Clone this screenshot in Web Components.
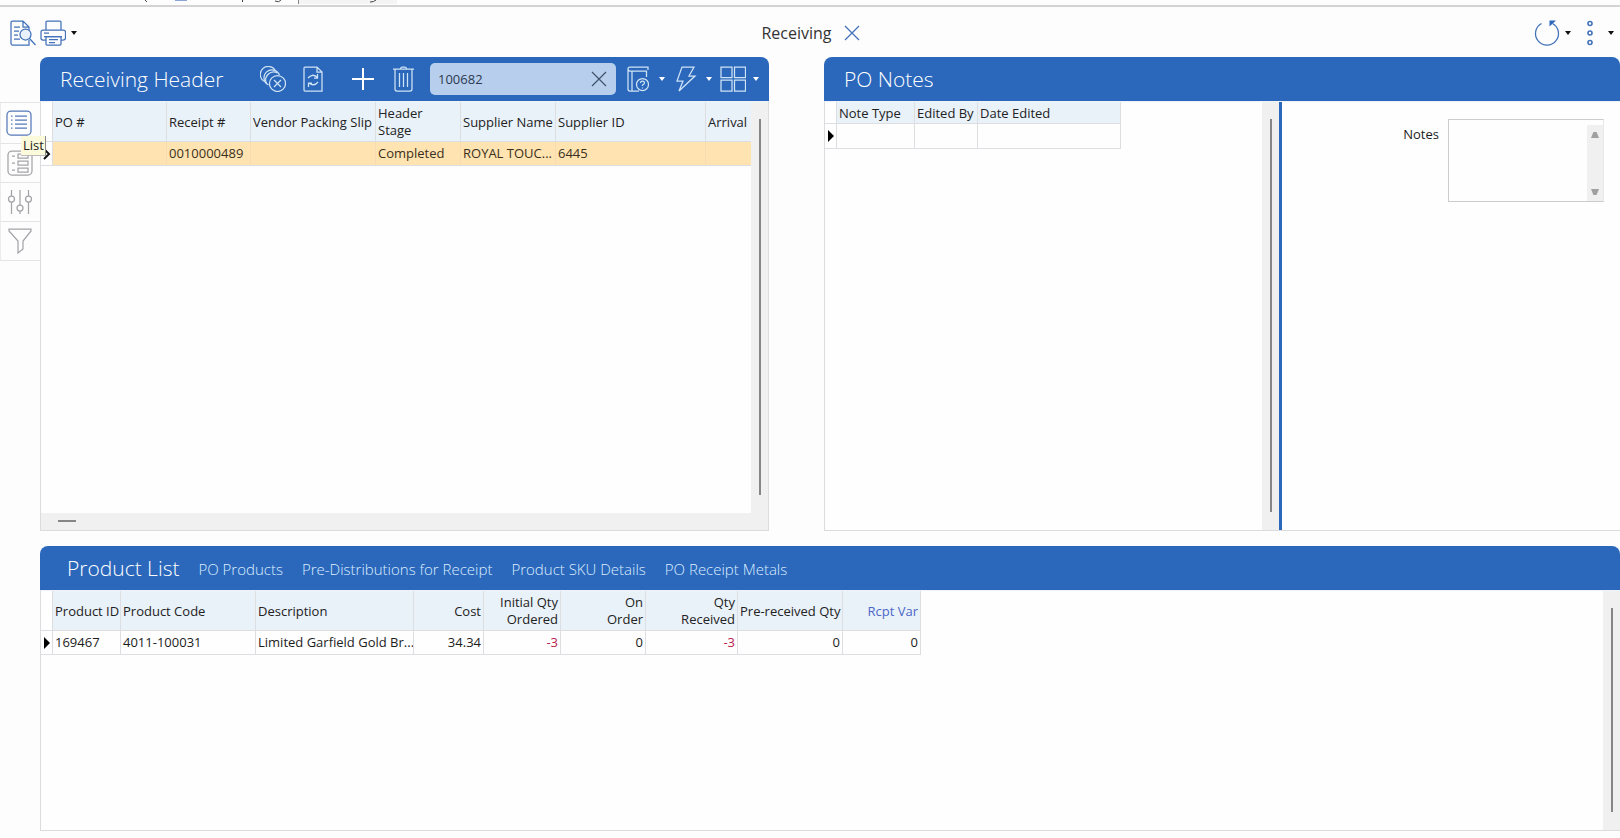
<!DOCTYPE html>
<html lang="en">
<head>
<meta charset="utf-8">
<title>Receiving</title>
<style>
  body { margin: 0; background: #fdfdfe; color: #1c1c1c; font: 13px/17px "Open Sans", "Noto Sans", sans-serif; }
</style>
</head>
<body>
<receiving-app></receiving-app>

<template id="app-template">
  <style>
    :host { display: grid; grid-template: 8px 49px minmax(300px, 474fr) 15px minmax(200px, 285fr) / 40px minmax(0, 1fr); min-height: 100vh; box-sizing: border-box; padding-bottom: 7px; }
    window-strip, page-bar { grid-column: 1 / -1; }
    side-rail { grid-row: 3; grid-column: 1; padding-top: 45px; }
    .upper { grid-row: 3; grid-column: 2; display: grid; grid-template-columns: minmax(0, 729fr) minmax(0, 796fr); gap: 55px; }
    .lower { grid-row: 5; grid-column: 2; }
    .split { flex: 1; display: flex; min-width: 0; }
    .notes-list { flex: 0 1 454px; display: flex; min-width: 0; border-right: 3px solid #2b68bb; }
    .fill { flex: 1; min-width: 0; }
    .detail { flex: 1; display: flex; justify-content: flex-end; align-items: flex-start; padding: 17px 16px 0 0; }
    .column { flex: 1; display: flex; flex-direction: column; min-width: 0; }
    .row { flex: 1; display: flex; min-height: 0; }
    .tabs { display: flex; align-items: center; gap: 19px; padding-left: 7px; }
    .tabs a { color: #dcedff; font-size: 15px; line-height: 20px; text-decoration: none; white-space: nowrap; margin-top: 2px; }
    .tabs h2 { margin: 0; font: inherit; }
  </style>
  <window-strip></window-strip>
  <page-bar heading="Receiving"></page-bar>
  <side-rail></side-rail>
  <div class="upper">
    <work-panel>
      <span slot="title">Receiving Header</span>
      <header-tools slot="tools"></header-tools>
      <div class="column">
        <div class="row">
          <data-grid class="fill" name="receipts" marker="open"></data-grid>
          <scroll-track></scroll-track>
        </div>
        <scroll-track across></scroll-track>
      </div>
    </work-panel>
    <work-panel flush>
      <span slot="title">PO Notes</span>
      <div class="split">
        <div class="notes-list">
          <data-grid class="fill" name="notes"></data-grid>
          <scroll-track></scroll-track>
        </div>
        <div class="detail"><notes-field></notes-field></div>
      </div>
    </work-panel>
  </div>
  <work-panel class="lower" flush>
    <div slot="title" class="tabs">
      <h2>Product List</h2>
      <a href="#po">PO Products</a>
      <a href="#pre">Pre-Distributions for Receipt</a>
      <a href="#sku">Product SKU Details</a>
      <a href="#metals">PO Receipt Metals</a>
    </div>
    <data-grid class="fill" name="products"></data-grid>
    <scroll-track></scroll-track>
  </work-panel>
</template>

<script>
const define = (name, render) => customElements.define(name, class extends HTMLElement {
  connectedCallback() {
    if (this.shadowRoot) return;
    this.attachShadow({ mode: 'open' }).innerHTML = render(this);
  }
});

const ICONS = {
  preview: '<path d="M17 25H2.5Q1 25 1 23.500V2.500Q1 1 2.500 1H13L19 7V10M13 1V7H19M4 7H10M4 11H9M4 15H8M4 19H10M19 20V25H15"/><circle cx="15.500" cy="14.500" r="5.500" fill="#e9f2fc"/><path d="M19.500 18.500L25.500 25"/>',
  printer: '<path d="M6 10V2Q6 1 7 1H20Q21 1 21 2V10M6 20H3Q1 20 1 18V12Q1 10 3 10H23Q25.500 10 25.500 12V18Q25.500 20 23 20H21M4 13H9M4 16.500H22"/><path d="M6 16.500H21V24Q21 25 20 25H7Q6 25 6 24ZM9 19.500H18M9 22.500H15"/>',
  close: '<path d="M6 6L20 20M20 6L6 20"/>',
  refresh: '<path d="M7.500 3.500A11.500 11.500 0 1 0 18.500 3.500"/><path d="M15.500 0.500H22L15.500 6.500Z" fill="#2b68bb" stroke="none"/>',
  dots: '<g stroke-width="1.600"><circle cx="13" cy="3.500" r="2"/><circle cx="13" cy="13" r="2"/><circle cx="13" cy="22.500" r="2"/></g>',
  list: '<rect x="1" y="1" width="24" height="24" rx="4"/><path d="M9 6H21M9 10H21M9 14H21M9 18H21M5 6H6.500M5 10H6.500M5 14H6.500M5 18H6.500"/>',
  form: '<rect x="1" y="1" width="24" height="24" rx="4"/><path d="M5 6H8M5 13H8M5 20H8"/><path d="M11 4H21V8H11ZM11 11H21V15H11ZM11 18H21V22H11Z"/>',
  sliders: '<circle cx="4.500" cy="10" r="3"/><circle cx="13" cy="19" r="3"/><circle cx="21.500" cy="10" r="3"/><path d="M4.500 1V7M4.500 13V25M13 1V16M13 22V25M21.500 1V7M21.500 13V25"/>',
  funnel: '<path d="M2 1H24V3L16 13V21L11 25V13L2 3Z"/>',
  coins: '<path d="M4.500 15.500A8 8 0 1 1 15.500 5"/><path d="M8.500 19A8 8 0 1 1 19.500 9"/><path d="M6.500 17.500A8 8 0 0 1 17.500 7"/><circle cx="17.500" cy="17.500" r="8"/><path d="M14 14L21 21M21 14L14 21"/>',
  sync: '<path d="M5 1H17L22 6V25H5Q4 25 4 24V2Q4 1 5 1ZM17 1V6H22"/><path d="M8 12Q12 7 17 11M17.500 8V12H14M18 16Q14 21 9 17M8.500 21V17H12"/>',
  plus: '<path d="M13 2V24M2 13H24" stroke-width="2"/>',
  trash: '<path d="M3 3H24M5 3V23Q5 25 7 25H20Q22 25 22 23V3M10.500 3Q10.500 1 12 1H15Q16.500 1 16.500 3M9.500 7V21M13.500 7V21M17.500 7V21"/>',
  book: '<path d="M20.500 11V5H4Q2 5 2 3Q2 1 4 1H22V4M2 3V23Q2 25 4 25H13M6 5V25"/><circle cx="16.500" cy="18.500" r="6"/><path d="M14.500 17Q14.500 15 16.500 15T18.500 17Q18.500 18 16.500 19V20M16.500 21.500V22.500"/>',
  bolt: '<path d="M9 1H21L16 10H22L6 25L10 15H4Z"/>',
  tiles: '<path d="M1 1H12V11.500H1ZM14.500 1H25.500V11.500H14.500ZM1 14H12V25H1ZM14.500 14H25.500V25H14.500Z"/>'
};

define('app-icon', el => `
  <style>
    :host { display: block; width: 26px; height: 26px; flex: none; }
    svg { display: block; fill: none; stroke: currentColor; stroke-width: 1.250; }
  </style>
  <svg width="26" height="26" viewBox="0 0 26 26" aria-hidden="true">${ICONS[el.getAttribute('name')]}</svg>`);

define('icon-button', el => `
  <style>
    :host { display: block; flex: none; }
    button { display: flex; align-items: center; gap: var(--menu-gap, 5px); margin: 0; padding: 0; border: 0; background: none; color: inherit; }
    i { width: 10px; height: 4px; background: var(--caret, currentColor); clip-path: polygon(20% 0, 80% 0, 50% 100%); }
  </style>
  <button type="button" aria-label="${el.getAttribute('label')}">
    <app-icon name="${el.getAttribute('icon')}"></app-icon>${el.hasAttribute('menu') ? '<i></i>' : ''}
  </button>`);

define('window-strip', () => `
  <style>
    :host { display: flex; align-items: flex-start; border-bottom: 2px solid #d3d3d3; height: 5px; overflow: hidden; }
    svg { display: block; }
  </style>
  <svg width="460" height="5" aria-hidden="true">
    <rect x="299" width="98" height="4" fill="#f4f4f4"/>
    <path d="M298.500 0V4" stroke="#888"/>
    <path d="M145 0L147 2M242.500 0V2M275 1Q279 3 281 0M370 2Q374 2 376 0" stroke="#444" fill="none"/>
    <path d="M175 0.500H187" stroke="#8aa4d4"/>
  </svg>`);

define('page-bar', el => `
  <style>
    :host { display: grid; grid-template-columns: 1fr auto 1fr; align-items: center; padding: 1px 4px 0 10px; color: #4272b8; --caret: #111; --menu-gap: 3px; }
    div { display: flex; align-items: center; gap: 4px; }
    .end { justify-content: flex-end; }
    h1 { margin: 0; color: #333; font-size: 16px; font-weight: 400; line-height: 20px; }
    .title { gap: 7px; }
  </style>
  <div>
    <icon-button icon="preview" label="Preview"></icon-button>
    <icon-button icon="printer" label="Print" menu></icon-button>
  </div>
  <div class="title"><h1>${el.getAttribute('heading')}</h1><icon-button icon="close" label="Close"></icon-button></div>
  <div class="end">
    <icon-button icon="refresh" label="Refresh" menu></icon-button>
    <icon-button icon="dots" label="More" menu></icon-button>
  </div>`);

define('side-rail', () => `
  <style>
    :host { display: block; color: #a4a4a8; }
    nav { position: relative; border-top: 1px solid #e4e4e6; }
    icon-button { display: flex; justify-content: center; align-items: center; height: 38px; padding-right: 2px; border-bottom: 1px solid #e4e4e6; border-left: 1px solid #ececee; }
    .on { color: #5579b8; height: 40px; padding-right: 4px; }
    .tip { position: absolute; z-index: 2; left: 21px; top: 33px; padding: 1px 1px 1px 2px; background: #fbfbdc; border-right: 1px solid #888; border-bottom: 1px solid #bbb; color: #222; }
  </style>
  <nav aria-label="Views">
    <icon-button class="on" icon="list" label="List"></icon-button>
    <icon-button icon="form" label="Form"></icon-button>
    <icon-button icon="sliders" label="Settings"></icon-button>
    <icon-button icon="funnel" label="Filter"></icon-button>
    <span class="tip" role="tooltip">List</span>
  </nav>`);

define('work-panel', el => `
  <style>
    :host { display: flex; flex-direction: column; min-width: 0; }
    header { display: flex; align-items: center; justify-content: space-between; height: 44px; padding: 0 8px 0 20px; background: #2b68bb; color: #fff; border-radius: 8px 8px 0 0; }
    .title { font-size: 21px; line-height: 28px; font-weight: 300; white-space: nowrap; }
    .body { flex: 1; display: flex; min-height: 0; border: 1px solid #dcdcdf; border-top-color: #eef3f9; background: #fefefe; }
    :host([flush]) .body { border-right: 0; }
  </style>
  <header><div class="title"><slot name="title"></slot></div><slot name="tools"></slot></header>
  <div class="body"><slot></slot></div>`);

define('header-tools', () => `
  <style>
    :host { display: flex; align-items: center; gap: 14px; color: #cfe3f5; --caret: #fff; }
    .bright { color: #fff; margin-left: 10px; }
    .search { display: flex; align-items: center; width: 186px; height: 32px; padding: 0 4px 0 8px; box-sizing: border-box; border-radius: 5px; background: #b7cfed; color: #44546c; }
    input { flex: 1; min-width: 0; padding: 0; border: 0; outline: 0; background: none; color: #2c3950; font: inherit; }
    .menus { display: flex; gap: 6px; margin-left: -4px; }
  </style>
  <icon-button icon="coins" label="Void receipts"></icon-button>
  <icon-button icon="sync" label="Reload document"></icon-button>
  <icon-button class="bright" icon="plus" label="Add"></icon-button>
  <icon-button icon="trash" label="Delete"></icon-button>
  <div class="search"><input type="text" aria-label="Search" value="100682"><icon-button icon="close" label="Clear"></icon-button></div>
  <div class="menus">
    <icon-button icon="book" label="Help" menu></icon-button>
    <icon-button icon="bolt" label="Actions" menu></icon-button>
    <icon-button icon="tiles" label="Layout" menu></icon-button>
  </div>`);

define('scroll-track', () => `
  <style>
    :host { display: flex; flex: none; width: 17px; box-sizing: border-box; padding: 17px 7px 18px 8px; background: #f0f0f1; }
    i { flex: 1; background: #868686; }
    :host([across]) { width: auto; height: 17px; padding: 7px 0 8px 17px; }
    :host([across]) i { flex: 0 0 18px; }
  </style><i></i>`);

define('notes-field', () => `
  <style>
    :host { display: flex; align-items: flex-start; gap: 9px; }
    label { margin-top: 7px; }
    .box { display: flex; width: 156px; height: 83px; box-sizing: border-box; border: 1px solid #ccc; border-right-color: #e8e8e8; background: #fefefe; }
    textarea { flex: 1; min-width: 0; border: 0; padding: 4px; outline: 0; resize: none; background: none; font: inherit; overflow: hidden; }
    .bar { display: flex; flex-direction: column; justify-content: space-between; align-items: center; width: 16px; box-sizing: border-box; margin-top: 5px; padding: 7px 0 6px; background: #f0f0f0; }
    i { width: 8px; height: 6px; background: #a0a0a0; clip-path: polygon(30% 0, 70% 0, 100% 100%, 0 100%); }
    i + i { transform: rotate(180deg); }
  </style>
  <label for="notes">Notes</label>
  <div class="box"><textarea id="notes"></textarea><div class="bar"><i></i><i></i></div></div>`);

const GRIDS = {
  receipts: {
    selected: true, tall: true,
    columns: [['PO #', 114], ['Receipt #', 84], ['Vendor Packing Slip', 125], ['Header<br>Stage', 85], ['Supplier Name', 95], ['Supplier ID', 150], ['Arrival', 0]],
    row: ['', '0010000489', '', 'Completed', 'ROYAL TOUC...', '6445', '']
  },
  notes: { columns: [['Note Type', 78], ['Edited By', 63], ['Date Edited', 143]], row: ['', '', ''] },
  products: {
    tall: true,
    columns: [['Product ID', 68], ['Product Code', 135], ['Description', 158], ['Cost', 70, 'num'], ['Initial Qty<br>Ordered', 77, 'num'], ['On<br>Order', 85, 'num'], ['Qty<br>Received', 92, 'num'], ['Pre-received Qty', 105, 'num'], ['Rcpt Var', 78, 'num link']],
    row: ['169467', '4011-100031', 'Limited Garfield Gold Br...', '34.34', '-3', '0', '-3', '0', '0']
  }
};

define('data-grid', el => {
  const g = GRIDS[el.getAttribute('name')];
  const fluid = g.columns.some(c => !c[1]);
  const width = g.columns.reduce((sum, c) => sum + c[1], 12);
  const marker = el.getAttribute('marker') === 'open'
    ? '<svg width="9" height="12" viewBox="0 0 9 12"><path d="M1 1L6 6L1 11" fill="none" stroke="#111" stroke-width="2"/></svg>'
    : '<svg width="6" height="12" viewBox="0 0 6 12"><path d="M0 0L6 6L0 12Z"/></svg>';
  return `
  <style>
    :host { display: block; overflow: hidden; }
    table { width: ${fluid ? '100%' : width + 'px'}; table-layout: fixed; border-collapse: separate; border-spacing: 0; }
    th, td { box-sizing: border-box; padding: 0 2px; border-right: 1px solid #dcdee2; border-bottom: 1px solid #dcdee2; text-align: left; font-weight: 400; white-space: nowrap; overflow: hidden; }
    th { height: ${g.tall ? 40 : 22}px; padding-top: 1px; background: #e9f1f9; color: #222; }
    td { height: ${g.tall ? 24 : 25}px; }
    .mark { padding: 0; background: #fff; text-align: right; }
    .mark svg { display: block; margin-left: auto; margin-right: 2px; }
    td.mark.open svg { margin-right: 0; }
    .num { text-align: right; }
    th.link { color: #4a68c8; }
    .neg { color: #b8204c; }
    .selected td:not(.mark) { background: #ffe3b0; border-right-color: #f5dcb2; color: #3a3020; }
    .fluid tr > :last-child { border-right: 0; }
  </style>
  <table class="${fluid ? 'fluid' : ''}">
    <colgroup><col style="width:12px">${g.columns.map(c => `<col${c[1] ? ` style="width:${c[1]}px"` : ''}>`).join('')}</colgroup>
    <thead><tr><th class="mark"></th>${g.columns.map(c => `<th scope="col" class="${c[2] || ''}">${c[0]}</th>`).join('')}</tr></thead>
    <tbody><tr class="${g.selected ? 'selected' : ''}"><td class="mark ${el.getAttribute('marker') || ''}">${marker}</td>${g.row.map((v, i) => `<td class="${(g.columns[i][2] || '').split(' ')[0]} ${v.startsWith('-') ? 'neg' : ''}">${v}</td>`).join('')}</tr></tbody>
  </table>`;
});

customElements.define('receiving-app', class extends HTMLElement {
  connectedCallback() {
    this.attachShadow({ mode: 'open' }).append(document.getElementById('app-template').content.cloneNode(true));
  }
});
</script>
</body>
</html>
